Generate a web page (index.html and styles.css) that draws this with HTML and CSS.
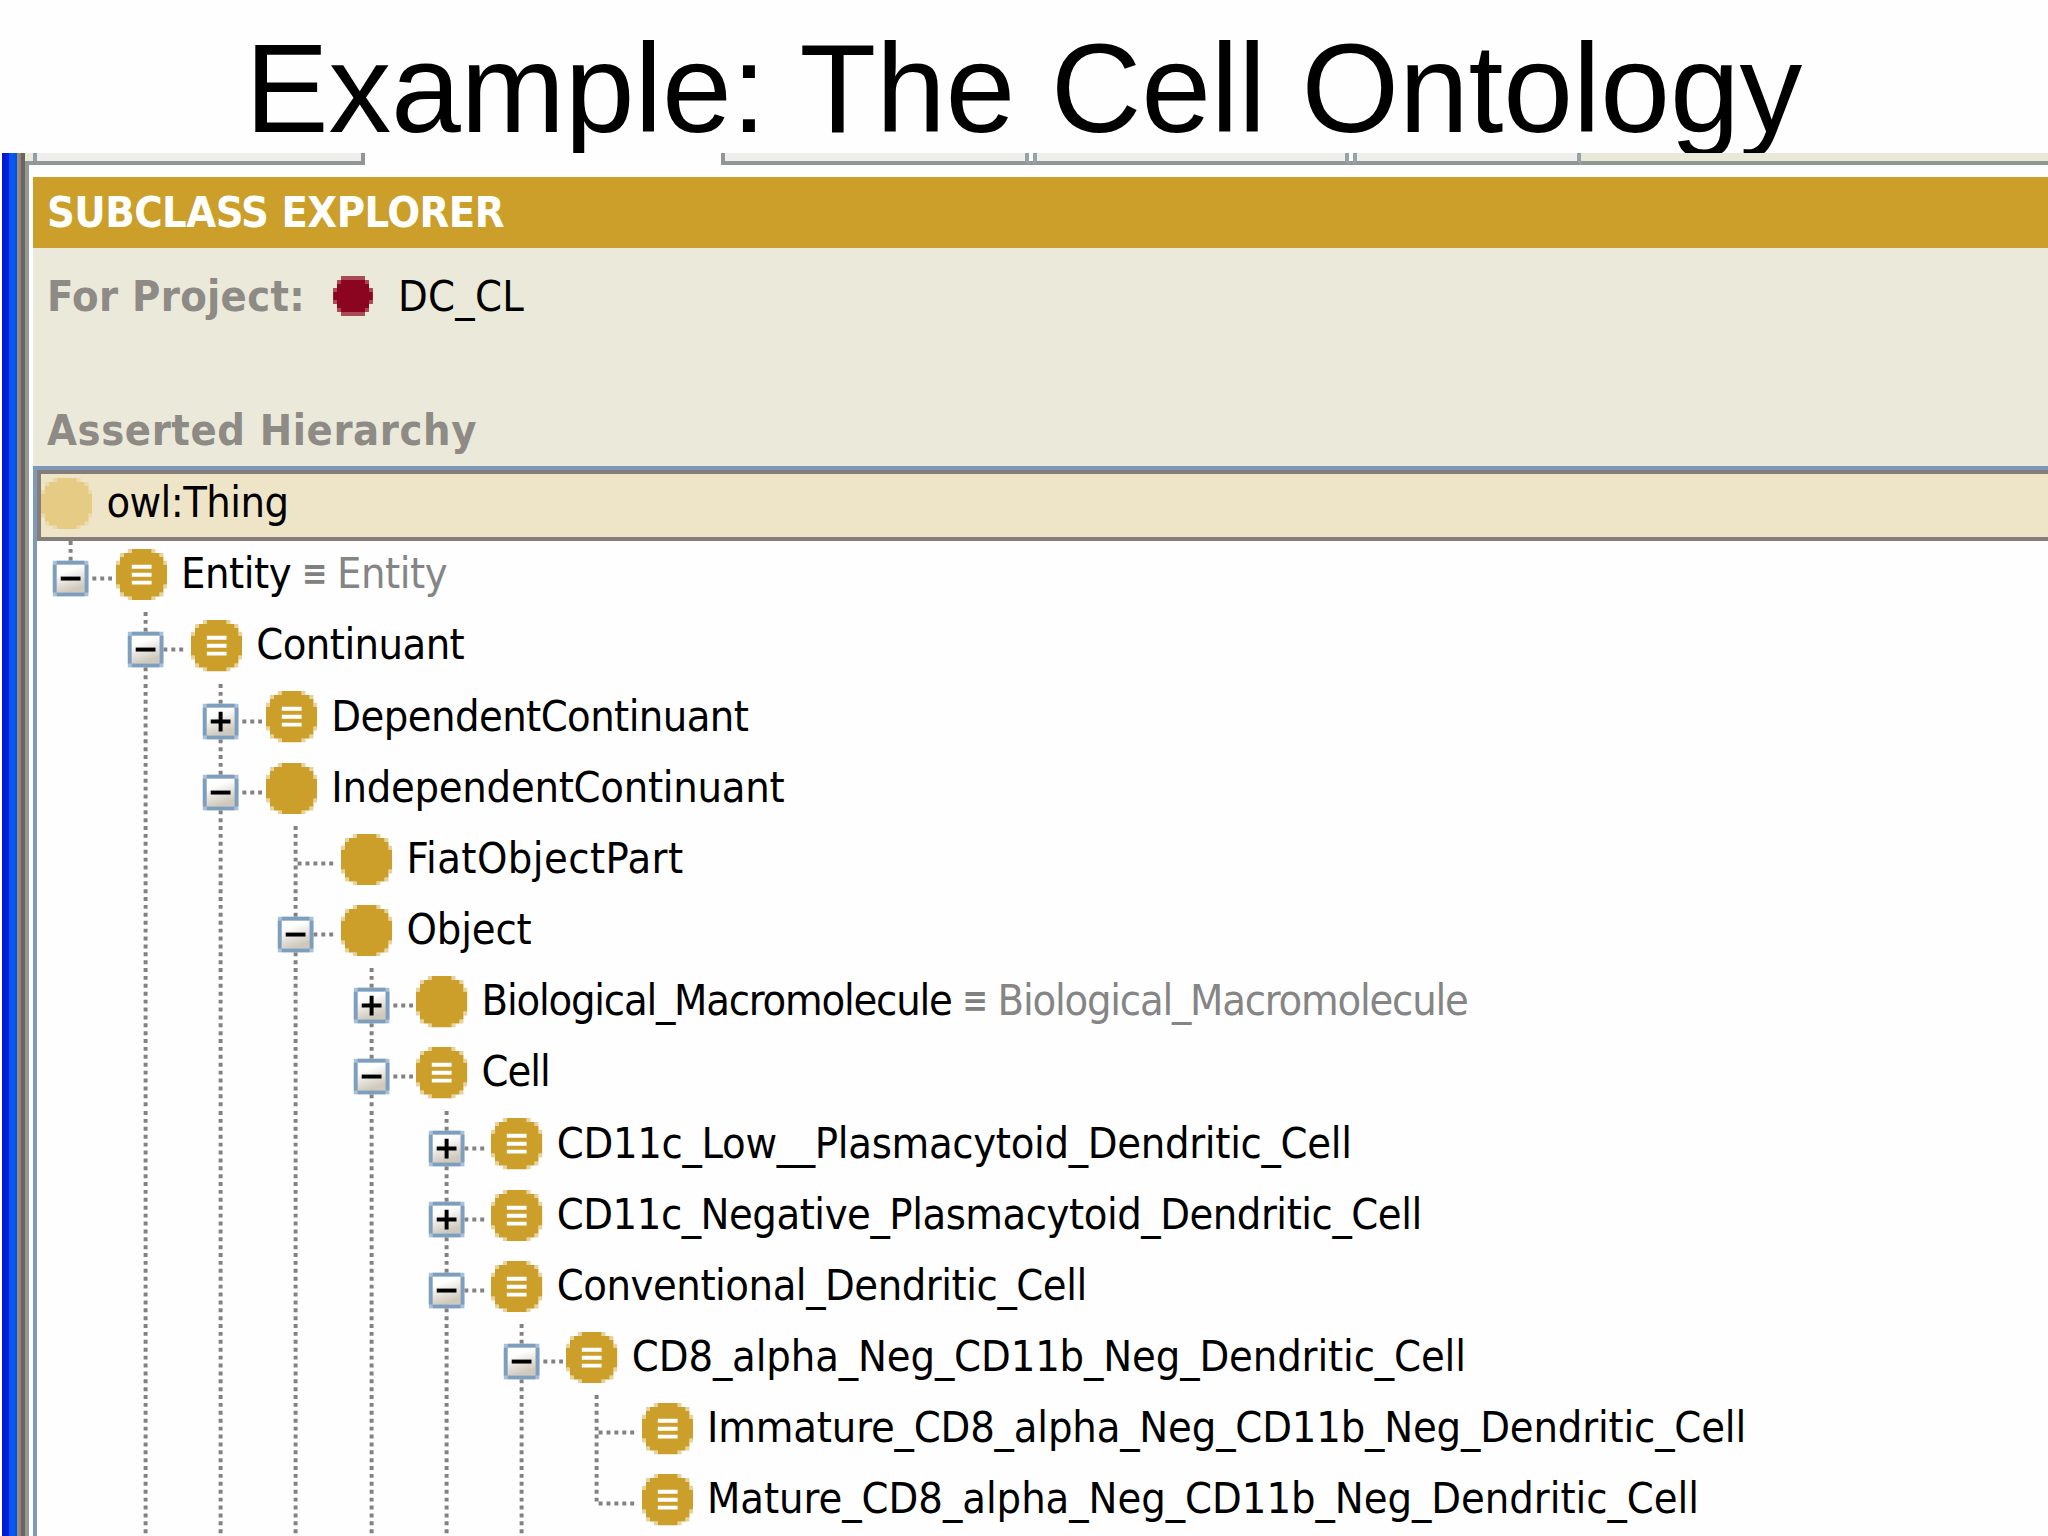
FILE: index.html
```
<!DOCTYPE html>
<html lang="en">
<head>
    <meta charset="UTF-8">
    <title>Example: The Cell Ontology</title>
    <link rel="stylesheet" href="styles.css">
</head>
<body>
    <svg class="defs">
        <symbol id="disc" viewBox="0 0 13 13">
            <path d="M4 0H9V1H11V2H12V4H13V9H12V11H11V12H9V13H4V12H2V11H1V9H0V4H1V2H2V1H4Z"/>
            <path opacity=".45" d="M3 0H4V1H3ZM9 0H10V1H9ZM3 12H4V13H3ZM9 12H10V13H9ZM0 3H1V4H0ZM12 3H13V4H12ZM0 9H1V10H0ZM12 9H13V10H12ZM1 1H2V2H1ZM11 1H12V2H11ZM1 11H2V12H1ZM11 11H12V12H11Z"/>
        </symbol>
        <symbol id="bars" viewBox="0 0 13 13">
            <path fill="#fff" d="M4 4H9V5H4ZM4 6H9V7H4ZM4 8H9V9H4Z"/>
        </symbol>
        <symbol id="dot" viewBox="0 0 10 10">
            <path d="M2 1H8V2H9V4H9.9V6H9V8H8V9H2V8H1V6H0.1V4H1V2H2Z"/>
            <path opacity=".7" d="M2 0H8V1H2ZM2 9H8V10H2ZM1 1H2V2H1ZM8 1H9V2H8ZM1 8H2V9H1ZM8 8H9V9H8ZM0 3H1V7H0ZM9 3H10V7H9Z"/>
        </symbol>
    </svg>

    <h1><span data-width="1557">Example: The Cell Ontology</span></h1>

    <div class="window">
        <div class="edge"></div>
        <div class="main">
            <div class="tabs">
                <div class="tab first"></div>
                <div class="tab selected"></div>
                <div class="tab second"></div>
                <div class="gap"></div>
                <div class="tab third"></div>
                <div class="gap"></div>
                <div class="tab fourth"></div>
                <div class="rest"></div>
            </div>
            <div class="panel">
                <div class="title"><span data-width="457">SUBCLASS EXPLORER</span></div>
                <div class="project">
                    <b data-width="258">For Project:</b>
                    <svg class="project-dot"><use href="#dot"/></svg>
                    <span data-width="126">DC_CL</span>
                </div>
                <div class="subtitle"><b data-width="430">Asserted Hierarchy</b></div>
                <div class="tree" id="tree"></div>
            </div>
        </div>
    </div>

    <script src="tree.js"></script>
</body>
</html>
```
FILE: styles.css
```
:root {
    --u: 3.954px;
}
body {
    margin: 0;
    width: 2048px;
    height: 1536px;
    overflow: hidden;
    background-color: #fefefe;
    font-family: "DejaVu Sans Condensed", "DejaVu Sans", sans-serif;
    font-stretch: condensed;
    font-size: 43px;
    color: #000;
}
.defs {
    display: none;
}
h1 {
    margin: 0;
    height: 153px;
    padding-left: 245px;
    font: 125.5px/177px "Liberation Sans", Arial, sans-serif;
    white-space: nowrap;
    word-spacing: 1px;
}
.window {
    position: relative;
    display: flex;
    height: 1383px;
    background-color: #fefefe;
}
.edge {
    width: 25px;
    flex: none;
    background: linear-gradient(to right, #fff 2px, #0018d4 2px, #0020dc 9px, #0a50f0 9px, #0a5cf0 13px, #0050e0 17px, #9a9084 17px, #8a8078 21px, #6e645e 21px, #6e645e 25px);
}
.main {
    flex: 1;
    min-width: 0;
}
.tabs {
    display: flex;
    height: 12px;
    margin-bottom: 12px;
}
.tab, .gap, .rest {
    box-sizing: border-box;
    border-bottom: 4px solid #929695;
    background-color: #eeefec;
}
.tab.first {
    width: 340px;
    border-right: 4px solid #929695;
    background: linear-gradient(to right, #ecebda 8px, #8ea0ae 8px, #8ea0ae 12px, #eeefec 12px);
}
.tab.selected {
    width: 356px;
    border: none;
    background: none;
}
.tab.second {
    width: 308px;
    border-left: 4px solid #929695;
    border-right: 4px solid #96a3a8;
}
.tab.third {
    width: 316px;
    border-left: 4px solid #96a3a8;
    border-right: 4px solid #96a3a8;
}
.tab.fourth {
    width: 228px;
    border-left: 4px solid #96a3a8;
    border-right: 4px solid #96a3a8;
}
.gap {
    width: 4px;
    background-color: #fefefe;
}
.rest {
    flex: 1;
    background-color: #e8e9d8;
}
.panel {
    height: 1375px;
    margin-top: -16px;
    padding: 16px 0 0 4px;
    border-left: 4px solid #929a98;
}
.title {
    height: 71px;
    padding-left: 14px;
    background-color: #cb9f29;
    color: #fff;
    font-weight: bold;
    line-height: 71px;
}
.project, .subtitle {
    display: flex;
    align-items: center;
    padding-left: 14px;
    background-color: #ebe9d9;
}
.project {
    height: 96px;
}
.subtitle {
    height: 72px;
    padding-top: 50px;
}
b {
    color: #8e8a86;
}
.project-dot {
    width: 40px;
    height: 40px;
    margin: 0 25px 0 28px;
    fill: #8b0520;
}
.tree {
    height: 1100px;
    border-top: 4px solid #7e9ab8;
    border-left: 4px solid #7e9ab8;
    background-color: #fefefe;
}
.row {
    display: flex;
    height: calc(18 * var(--u));
}
.row.root {
    box-sizing: border-box;
    border: 4px solid #857d79;
    border-right: none;
    background-color: #eee5c9;
}
.cell {
    width: calc(19 * var(--u));
    height: calc(18 * var(--u));
    flex: none;
}
.disc {
    width: calc(13 * var(--u));
    height: calc(13 * var(--u));
    flex: none;
    margin: calc(2 * var(--u)) 14px 0 3.6px;
    fill: #cb9f29;
}
.root .disc {
    margin: calc(1 * var(--u)) 14px 0 0;
    fill: #e6cb85;
}
.label, .eq, .same {
    flex: none;
    line-height: 65px;
    white-space: nowrap;
}
.root .label {
    margin-top: -4px;
}
.eq {
    width: 25px;
    margin: 0 10px 0 11px;
    font-size: 34px;
    font-weight: bold;
    color: #808080;
}
.same {
    color: #858585;
}
span, b {
    white-space: nowrap;
}
```
FILE: tree.js
```
// level, toggle, equivalent, label, label width
const rows = [
    [0, '', false, 'owl:Thing', 182],
    [1, '-', true, 'Entity', 110],
    [2, '-', true, 'Continuant', 208],
    [3, '+', true, 'DependentContinuant', 417],
    [3, '-', false, 'IndependentContinuant', 453],
    [4, '', false, 'FiatObjectPart', 277],
    [4, '-', false, 'Object', 125],
    [5, '+', false, 'Biological_Macromolecule', 470],
    [5, '-', true, 'Cell', 68],
    [6, '+', true, 'CD11c_Low__Plasmacytoid_Dendritic_Cell', 795],
    [6, '+', true, 'CD11c_Negative_Plasmacytoid_Dendritic_Cell', 865],
    [6, '-', true, 'Conventional_Dendritic_Cell', 530],
    [7, '-', true, 'CD8_alpha_Neg_CD11b_Neg_Dendritic_Cell', 834],
    [8, '', true, 'Immature_CD8_alpha_Neg_CD11b_Neg_Dendritic_Cell', 1039],
    [8, '', true, 'Mature_CD8_alpha_Neg_CD11b_Neg_Dendritic_Cell', 992]
];
const withSame = ['Entity', 'Biological_Macromolecule'];

// one 19x18 cell of the guide lines, with the toggle in the last one
function cell(col, level, toggle, last) {
    const own = col === level - 1;
    if (!own && col === 0) return '<div class="cell"></div>';
    const end = own && (last || col === 0) ? 10 : 18;
    let d = '';
    for (let y = 0; y < end; y += 2) d += `M8 ${y}h1v1h-1z`;
    if (own) {
        for (let x = (toggle ? 14 : 10) - col % 2; x < 19; x += 2) d += `M${x} 9h1v1h-1z`;
    }
    let box = '';
    if (toggle && own) {
        box = '<rect x="4" y="5" width="9" height="9" fill="#a9c0d6"/>' +
            '<path fill="#7e9ebd" d="M5 5h7v1h-7zM5 13h7v1h-7zM4 6h1v7h-1zM12 6h1v7h-1z"/>' +
            '<rect x="5" y="6" width="7" height="7" fill="url(#face)"/>' +
            '<path d="M6 9h5v1h-5z' + (toggle === '+' ? 'M8 7h1v5h-1z' : '') + '"/>';
    }
    return `<svg class="cell" viewBox="0 0 19 18"><path fill="#858082" d="${d}"/>${box}</svg>`;
}

let html = '<svg width="0" height="0" style="position:absolute"><linearGradient id="face" x2=".35" y2="1">' +
    '<stop offset=".3" stop-color="#fff"/><stop offset="1" stop-color="#cfc8bb"/></linearGradient></svg>';
rows.forEach(([level, toggle, eq, label, width], i) => {
    html += `<div class="row${level ? '' : ' root'}">`;
    for (let c = 0; c < level; c++) html += cell(c, level, toggle, i === rows.length - 1);
    html += `<svg class="disc"><use href="#disc"/>${eq ? '<use href="#bars"/>' : ''}</svg>`;
    html += `<span class="label" data-width="${width}">${label}</span>`;
    if (withSame.includes(label)) {
        html += `<span class="eq">≡</span><span class="same" data-width="${width}">${label}</span>`;
    }
    html += '</div>';
});
document.getElementById('tree').innerHTML = html;

// space the letters so that each text takes its own width
document.querySelectorAll('[data-width]').forEach(el => {
    const gap = (el.dataset.width - el.getBoundingClientRect().width) / el.textContent.length;
    el.style.letterSpacing = gap + 'px';
});
```
